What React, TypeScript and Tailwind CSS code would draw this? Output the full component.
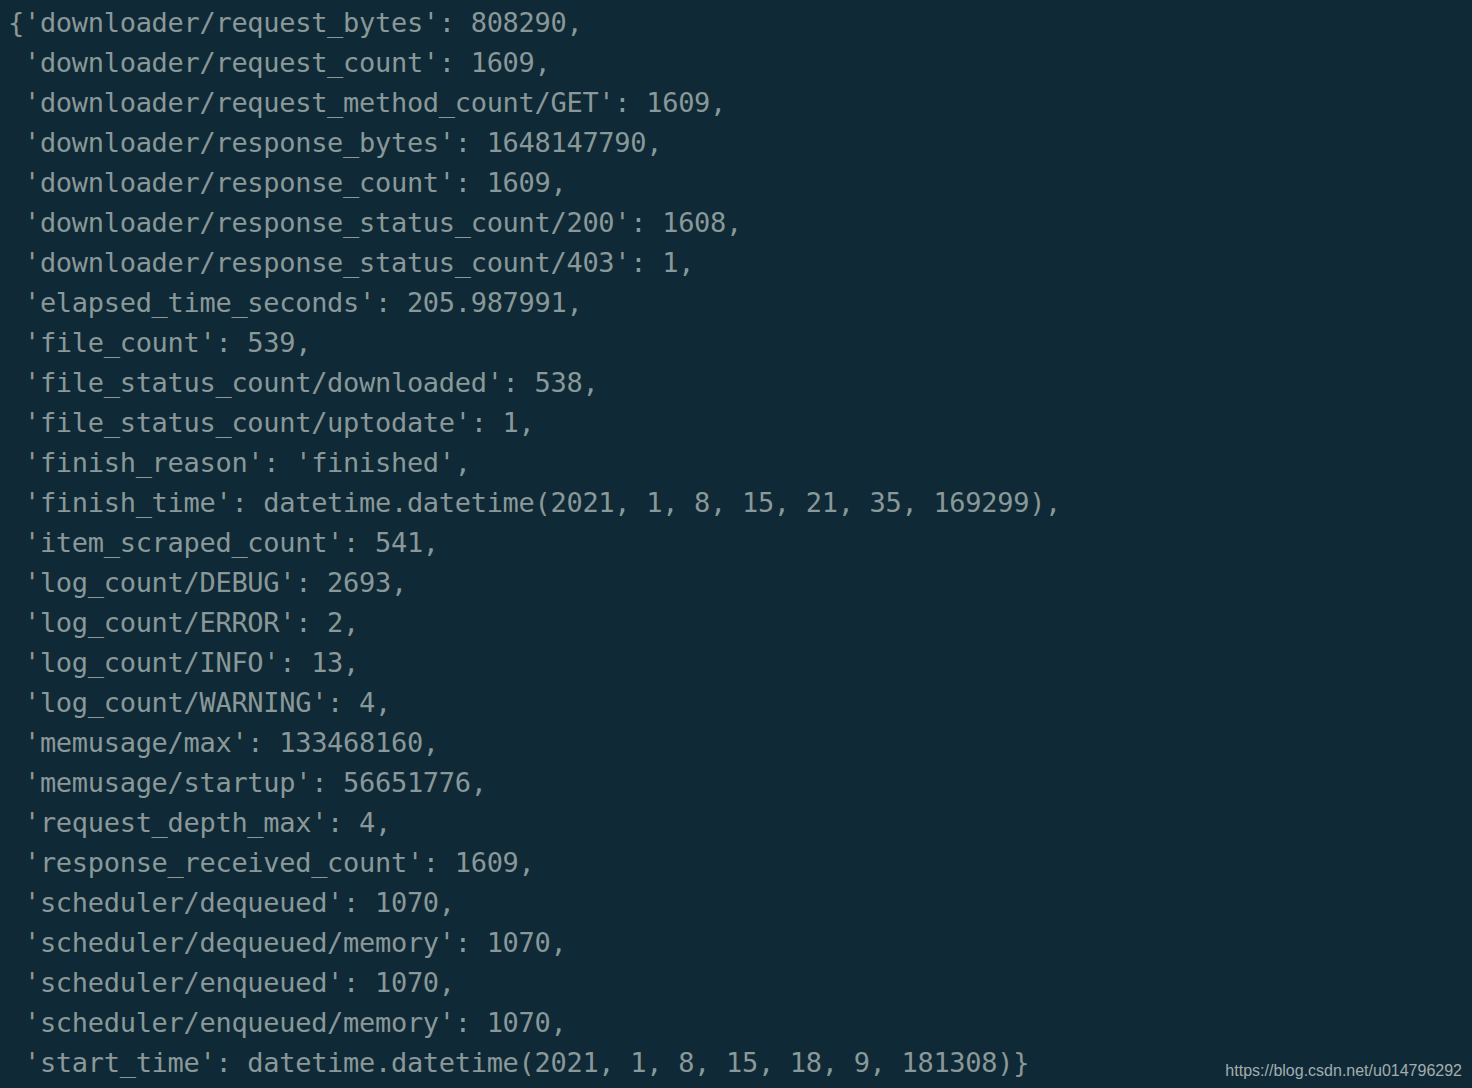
import React from 'react'

const lines = [
    "{'downloader/request_bytes': 808290,",
    " 'downloader/request_count': 1609,",
    " 'downloader/request_method_count/GET': 1609,",
    " 'downloader/response_bytes': 1648147790,",
    " 'downloader/response_count': 1609,",
    " 'downloader/response_status_count/200': 1608,",
    " 'downloader/response_status_count/403': 1,",
    " 'elapsed_time_seconds': 205.987991,",
    " 'file_count': 539,",
    " 'file_status_count/downloaded': 538,",
    " 'file_status_count/uptodate': 1,",
    " 'finish_reason': 'finished',",
    " 'finish_time': datetime.datetime(2021, 1, 8, 15, 21, 35, 169299),",
    " 'item_scraped_count': 541,",
    " 'log_count/DEBUG': 2693,",
    " 'log_count/ERROR': 2,",
    " 'log_count/INFO': 13,",
    " 'log_count/WARNING': 4,",
    " 'memusage/max': 133468160,",
    " 'memusage/startup': 56651776,",
    " 'request_depth_max': 4,",
    " 'response_received_count': 1609,",
    " 'scheduler/dequeued': 1070,",
    " 'scheduler/dequeued/memory': 1070,",
    " 'scheduler/enqueued': 1070,",
    " 'scheduler/enqueued/memory': 1070,",
    " 'start_time': datetime.datetime(2021, 1, 8, 15, 18, 9, 181308)}",
]

export default function App() {
    return (
        <div className="relative w-[1472px] h-[1088px] overflow-hidden bg-[#0f2a36]">
            <pre className="pl-[8px] pt-[3px] m-0 text-[27px] tracking-[-0.3px] leading-[40px] text-[#8a9899] font-['DejaVu_Sans_Mono',monospace]">
                { lines.map((line, i) => (
                    <div key={ i } className="whitespace-pre">{ line }</div>
                )) }
            </pre>
            <div className="absolute right-[10px] bottom-[9px] text-[16px] leading-none text-[#a3adb0] font-['Liberation_Sans',Arial,sans-serif]">
                https://blog.csdn.net/u014796292
            </div>
        </div>
    )
}
